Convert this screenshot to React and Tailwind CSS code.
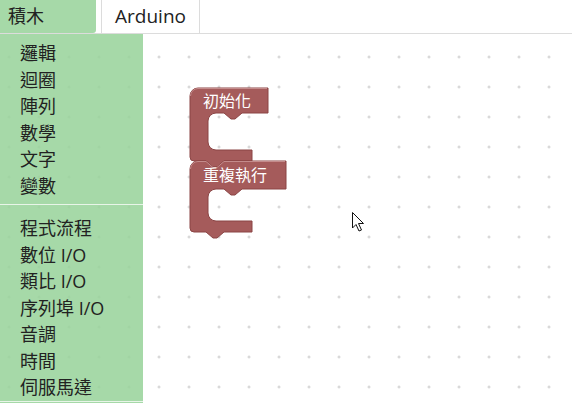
import React from 'react';

const groupA = ['邏輯', '迴圈', '陣列', '數學', '文字', '變數'];
const groupB = ['程式流程', '數位 I/O', '類比 I/O', '序列埠 I/O', '音調', '時間', '伺服馬達'];

// Blockly-like C block outline, page coordinates
const cBlock = ({ L, T, R, hb, e, ib, armR, B, topNotch }) => {
    const r = 8;
    return [
        `M${L},${T + r}`,
        `A${r},${r} 0 0 1 ${L + r},${T}`,
        topNotch ? `H${L + 16} l7,6 4,0 7,-6` : '',
        `H${R}`,
        `V${hb}`,
        `H${e + 34} l-7,6 -4,0 -7,-6`,
        `H${e + r}`,
        `A${r},${r} 0 0 0 ${e},${hb + r}`,
        `V${ib - r}`,
        `A${r},${r} 0 0 0 ${e + r},${ib}`,
        `H${armR}`,
        `V${B}`,
        `H${L + 34} l-7,6 -4,0 -7,-6`,
        `H${L + 4}`,
        `A4,4 0 0 1 ${L},${B - 4}`,
        'Z',
    ].join(' ');
};

const setupBlock = { L: 190, T: 88, R: 268, hb: 113, e: 208, ib: 150, armR: 252, B: 161, topNotch: false };
const loopBlock = { L: 190, T: 161, R: 286, hb: 189, e: 208, ib: 221, armR: 252, B: 232, topNotch: true };

const ToolboxItem = ({ label }) => (
    <div className="h-[26.5px] leading-[26.5px] pl-[20px] text-[18px] text-[#222222] whitespace-nowrap">
        {label}
    </div>
);

export default function App() {
    return (
        <div className="w-[572px] h-[403px] bg-white overflow-hidden flex flex-col font-['Open_Sans','Noto_Sans_CJK_TC',sans-serif]">
            {/* Tabs */}
            <div className="h-[34px] shrink-0 flex border-b border-[#dcdcdc]">
                <div className="w-[96px] h-full bg-[#a6d9a8] rounded-br-[3px] pl-[8px] flex items-center text-[18px] text-[#222222]">
                    積木
                </div>
                <div className="ml-[5px] w-[99px] h-full border-x border-[#dcdcdc] flex items-center justify-center text-[19px] text-[#222222]">
                    Arduino
                </div>
            </div>

            {/* Workspace */}
            <div className="relative flex-1">
                <svg className="absolute inset-0" width="572" height="369">
                    <defs>
                        <pattern id="grid" width="30" height="30" x="-6" y="8" patternUnits="userSpaceOnUse">
                            <path d="M13.5,15 H16.5 M15,13.5 V16.5" stroke="#cccccc" strokeWidth="1" />
                        </pattern>
                    </defs>
                    <rect width="572" height="369" fill="url(#grid)" />
                </svg>

                {/* Toolbox */}
                <div className="relative w-[143px] h-full bg-[rgba(150,210,153,0.85)] pt-[6px]">
                    {groupA.map((g) => <ToolboxItem key={g} label={g} />)}
                    <div className="mt-[5px] mb-[10px] h-px bg-[#e8f5e8]" />
                    {groupB.map((g) => <ToolboxItem key={g} label={g} />)}
                    <div className="h-px bg-[#e8f5e8]" />
                </div>

                {/* Blocks */}
                <svg className="absolute left-0 top-[-34px] pointer-events-none" width="572" height="403">
                    <path d={cBlock(setupBlock)} fill="#a55b5b" stroke="#8a4444" strokeWidth="1" />
                    <path d={cBlock(loopBlock)} fill="#a55b5b" stroke="#8a4444" strokeWidth="1" />
                    <path d="M190.5,169 A7.5,7.5 0 0 1 198,161.5 H206 l7,6 4,0 7,-6 H285" fill="none" stroke="#c48b8b" strokeWidth="1" />
                    <path d="M190.5,96 A7.5,7.5 0 0 1 198,88.5 H267" fill="none" stroke="#c48b8b" strokeWidth="1" />
                    <text x="203" y="107" fill="#ffffff" fontSize="16" fontFamily="Noto Sans CJK TC, sans-serif">初始化</text>
                    <text x="203" y="181" fill="#ffffff" fontSize="16" fontFamily="Noto Sans CJK TC, sans-serif">重複執行</text>

                    {/* mouse pointer */}
                    <path d="M352.5,212.5 V228 L356,224.5 L359,231 L361.5,230 L358.5,223.5 L363.5,223.5 Z" fill="#ffffff" stroke="#111111" strokeWidth="1" strokeLinejoin="round" />
                </svg>
            </div>
        </div>
    );
}
